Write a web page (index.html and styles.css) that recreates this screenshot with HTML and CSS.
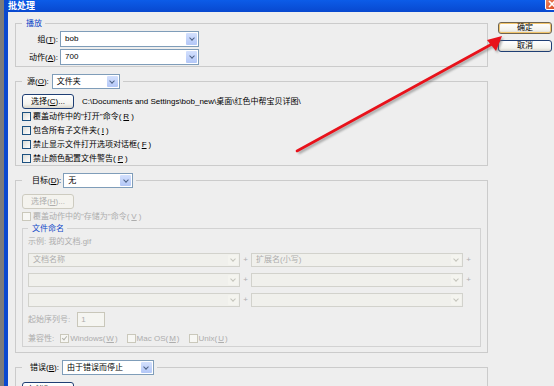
FILE: index.html
```html
<!DOCTYPE html>
<html lang="zh-CN">

<head>
    <meta charset="UTF-8">
    <meta name="viewport" content="width=device-width, initial-scale=1.0">
    <title>批处理</title>
    <link rel="stylesheet" href="styles.css">
</head>

<body>
    <div class="window">
        <div class="titlebar">
            <span class="title">批处理</span>
            <span class="close">
                <svg width="8" height="8" viewBox="0 0 8 8"><path d="M1 1L7 7M7 1L1 7" stroke="#fff" stroke-width="1.6"/></svg>
            </span>
        </div>

        <div class="client">
            <div class="main">
                <!-- 播放 -->
                <fieldset class="group">
                    <legend class="cap">播放</legend>
                    <div class="pairs">
                        <span class="lbl">组(<u>T</u>):</span>
                        <div class="combo"><span class="val">bob</span><span class="drop"></span></div>
                        <span class="lbl">动作(<u>A</u>):</span>
                        <div class="combo"><span class="val">700</span><span class="drop"></span></div>
                    </div>
                </fieldset>

                <!-- 源 -->
                <fieldset class="group">
                    <legend class="head src">
                        <span>源(<u>O</u>):</span>
                        <div class="combo w-src"><span class="val">文件夹</span><span class="drop"></span></div>
                    </legend>
                    <div class="pick">
                        <button class="btn">选择(<u>C</u>)...</button>
                        <span class="path">C:\Documents and Settings\bob_new\桌面\红色中帮宝贝详图\</span>
                    </div>
                    <div class="check"><span class="box"></span>覆盖动作中的"打开"命令(<u>R</u>)</div>
                    <div class="check"><span class="box"></span>包含所有子文件夹(<u>I</u>)</div>
                    <div class="check"><span class="box"></span>禁止显示文件打开选项对话框(<u>F</u>)</div>
                    <div class="check"><span class="box"></span>禁止颜色配置文件警告(<u>P</u>)</div>
                </fieldset>

                <!-- 目标 -->
                <fieldset class="group dest">
                    <legend class="head dst">
                        <span>目标(<u>D</u>):</span>
                        <div class="combo w-dst"><span class="val">无</span><span class="drop"></span></div>
                    </legend>
                    <button class="btn off first">选择(<u>H</u>)...</button>
                    <div class="check off"><span class="box"></span>覆盖动作中的"存储为"命令(<u>V</u>)</div>

                    <fieldset class="group inner">
                        <legend class="cap">文件命名</legend>
                        <div class="sample off">示例: 我的文档.gif</div>
                        <div class="names">
                            <div class="combo off"><span class="val">文档名称</span><span class="drop"></span></div>
                            <span class="plus">+</span>
                            <div class="combo off"><span class="val">扩展名(小写)</span><span class="drop"></span></div>
                            <span class="plus">+</span>
                            <div class="combo off"><span class="val"></span><span class="drop"></span></div>
                            <span class="plus">+</span>
                            <div class="combo off"><span class="val"></span><span class="drop"></span></div>
                            <span class="plus">+</span>
                            <div class="combo off"><span class="val"></span><span class="drop"></span></div>
                            <span class="plus">+</span>
                            <div class="combo off"><span class="val"></span><span class="drop"></span></div>
                            <span></span>
                        </div>
                        <div class="seq off">
                            <span>起始序列号:</span>
                            <span class="field">1</span>
                        </div>
                        <div class="compat off">
                            <span class="compat-lbl">兼容性:</span>
                            <span class="opt"><span class="box ticked"></span>Windows(<u>W</u>)</span>
                            <span class="opt"><span class="box"></span>Mac OS(<u>M</u>)</span>
                            <span class="opt"><span class="box"></span>Unix(<u>U</u>)</span>
                        </div>
                    </fieldset>
                </fieldset>

                <!-- 错误 -->
                <fieldset class="group">
                    <legend class="head err">
                        <span>错误(<u>B</u>):</span>
                        <div class="combo w-err"><span class="val">由于错误而停止</span><span class="drop"></span></div>
                    </legend>
                    <button class="btn saveas">存储为(<u>E</u>)...</button>
                </fieldset>
            </div>

            <div class="side">
                <button class="btn wide default">确定</button>
                <button class="btn wide">取消</button>
            </div>
        </div>
    </div>

    <svg class="annot" width="554" height="386" viewBox="0 0 554 386">
        <defs>
            <filter id="soft"><feGaussianBlur stdDeviation="0.9"/></filter>
        </defs>
        <g filter="url(#soft)" opacity="0.55" transform="translate(1.5 2)">
            <line x1="297" y1="151" x2="492" y2="44" stroke="#6a6a6a" stroke-width="3"/>
            <polygon points="502,36 487,40 496,51" fill="#6a6a6a"/>
        </g>
        <line x1="297" y1="151" x2="492" y2="44" stroke="#e8121b" stroke-width="2.6" stroke-linecap="round"/>
        <polygon points="502,36 487,40 496,51" fill="#e8121b"/>
    </svg>
</body>

</html>
```

FILE: styles.css
```css
* {
    box-sizing: border-box;
}

html, body {
    margin: 0;
    padding: 0;
}

body {
    position: relative;
    width: 554px;
    height: 386px;
    overflow: hidden;
    background-color: #7b7b7b;
    font: 8px/11px "Liberation Sans", "Noto Sans CJK SC", sans-serif;
    color: #000;
}

u {
    text-decoration: underline;
    text-underline-offset: 1px;
}

.window {
    margin-left: 4px;
    height: 386px;
    border-left: 4px solid #0a48d0;
    background-color: #eeeeee;
    overflow: hidden;
}

/* title bar */
.titlebar {
    height: 12px;
    display: flex;
    justify-content: space-between;
    align-items: flex-start;
    background: linear-gradient(#0c5ce8, #0848cf);
}

.title {
    color: #fff;
    font-size: 9px;
    font-weight: bold;
    line-height: 11px;
    padding-top: 1px;
}

.close {
    width: 13px;
    height: 12px;
    margin-top: -2px;
    margin-right: -4px;
    display: flex;
    justify-content: center;
    align-items: center;
    border: 1px solid #fff;
    border-radius: 2px;
    background: linear-gradient(135deg, #ee8a63, #d8431d);
}

/* body */
.client {
    display: flex;
    gap: 10px;
    padding: 6px 0 0 7px;
}

.main {
    width: 473px;
    display: flex;
    flex-direction: column;
    gap: 7px;
}

.side {
    display: flex;
    flex-direction: column;
    gap: 6px;
    padding-top: 4px;
}

/* group boxes */
.group {
    margin: 0;
    padding: 0 6px;
    min-width: 0;
    border: 1px solid #cbcbcb;
}

.group > legend {
    margin: 0;
    padding: 0 3px 0 4px;
    line-height: 11px;
}

.cap {
    color: #1048c8;
}

.head {
    display: flex;
    align-items: center;
    gap: 3px;
}

.head.src {
    padding-left: 5px;
}

.head.dst {
    padding-left: 10px;
    gap: 2px;
}

.head.err {
    padding-left: 8px;
    gap: 3px;
}

.pairs {
    display: grid;
    grid-template-columns: 36px 139px;
    column-gap: 2px;
    row-gap: 2px;
    align-items: center;
    padding: 2px 0 1px;
}

.lbl {
    text-align: right;
}

/* combo boxes */
.combo {
    height: 16px;
    display: flex;
    align-items: stretch;
    border: 1px solid #7f9db9;
    background-color: #fff;
    padding: 1px;
}

.combo .val {
    flex: 1;
    padding-left: 3px;
    line-height: 12px;
    white-space: nowrap;
    overflow: hidden;
}

.drop {
    width: 11px;
    display: flex;
    justify-content: center;
    align-items: center;
    border-radius: 1px;
    background: linear-gradient(#d3e0fd, #b3c7f7);
    color: #4d6185;
}

.drop::after {
    content: "";
    width: 3px;
    height: 3px;
    margin-top: -2px;
    border-right: 1.5px solid currentColor;
    border-bottom: 1.5px solid currentColor;
    transform: rotate(45deg);
}

.w-src {
    width: 68px;
    height: 15px;
}

.w-dst {
    width: 70px;
    height: 15px;
}

.w-err {
    width: 92px;
    height: 15px;
}

.combo.off {
    height: 14px;
    border-color: #d2d2cc;
    background-color: #f0f0ec;
}

.combo.off .val {
    line-height: 10px;
}

.combo.off .drop {
    width: 10px;
    background: #f4f4ef;
    color: #c4c4bc;
}

/* buttons */
.btn {
    height: 15px;
    width: 52px;
    padding: 0;
    font: inherit;
    line-height: 11px;
    color: #000;
    border: 1px solid #1f3f74;
    border-radius: 3px;
    background: linear-gradient(#ffffff, #f3f3ee 70%, #d9d6cc);
}

.btn.off {
    color: #adadad;
    border-color: #cdcbc0;
    background: #f4f3ee;
}

.btn.wide {
    width: 54px;
    height: 12px;
    line-height: 10px;
}

.btn.default {
    border-color: #6e6450;
    box-shadow: inset 0 0 0 1px #f2c56c;
}

.pick {
    display: flex;
    align-items: center;
    gap: 8px;
    margin-top: 5px;
}

.path {
    white-space: nowrap;
}

/* check boxes */
.check {
    height: 14px;
    display: flex;
    align-items: center;
    gap: 2px;
}

.box {
    width: 9px;
    height: 9px;
    flex: none;
    border: 1px solid #1c5180;
    background: linear-gradient(135deg, #dcdcd6, #ffffff);
}

.off {
    color: #adadad;
}

.off .box {
    border-color: #cac8bb;
    background: #f7f7f4;
}

.box.ticked {
    position: relative;
}

.box.ticked::after {
    content: "";
    position: absolute;
    left: 2px;
    top: 0;
    width: 2px;
    height: 4px;
    border-right: 1.5px solid #b4b4ac;
    border-bottom: 1.5px solid #b4b4ac;
    transform: rotate(40deg);
}

/* 目标 */
.dest {
    padding-bottom: 5px;
}

.btn.first {
    margin-top: 6px;
}

.group.inner {
    padding: 0 5px 2px;
    border-color: #d2d2d2;
}

.sample {
    height: 12px;
    margin-top: 2px;
    line-height: 12px;
}

.names {
    display: grid;
    grid-template-columns: 212px 11px 212px 11px;
    row-gap: 6px;
    margin-top: 5px;
}

.plus {
    color: #adadad;
    text-align: center;
    line-height: 14px;
}

.seq {
    display: flex;
    align-items: center;
    gap: 7px;
    margin-top: 5px;
}

.field {
    width: 28px;
    height: 15px;
    padding-left: 3px;
    line-height: 13px;
    border: 1px solid #c9c7ba;
    background-color: #f5f5f1;
}

.compat {
    height: 12px;
    display: flex;
    align-items: center;
    gap: 9px;
    margin-top: 5px;
}

.compat-lbl {
    margin-right: -3px;
}

.opt {
    display: flex;
    align-items: center;
    gap: 1px;
}

.btn.saveas {
    margin-top: 7px;
    color: #000;
}

/* annotation arrow on top of the dialog */
.annot {
    position: absolute;
    left: 0;
    top: 0;
    pointer-events: none;
}
```
